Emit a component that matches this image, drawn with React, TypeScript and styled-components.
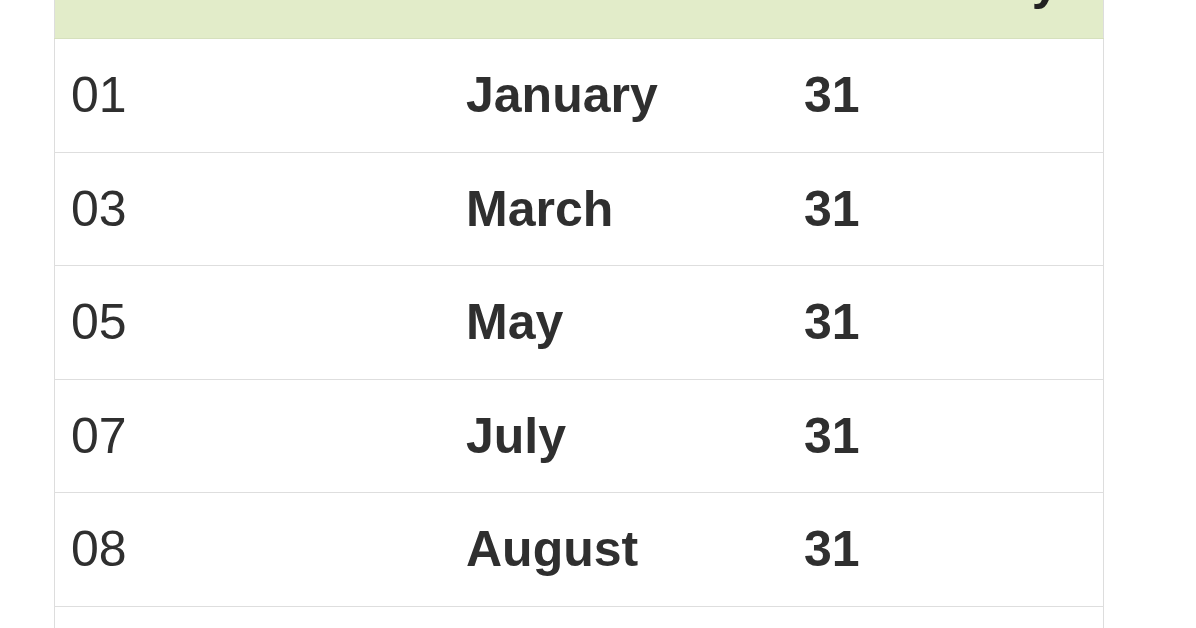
import React, { FC } from 'react';
import styled, { createGlobalStyle } from 'styled-components';

interface MonthRow {
  number: string;
  name: string;
  days: number;
}

const MONTHS: MonthRow[] = [
  { number: '01', name: 'January', days: 31 },
  { number: '03', name: 'March', days: 31 },
  { number: '05', name: 'May', days: 31 },
  { number: '07', name: 'July', days: 31 },
  { number: '08', name: 'August', days: 31 },
  { number: '10', name: 'October', days: 31 },
];

const GlobalStyle = createGlobalStyle`
  html, body {
    margin: 0;
    padding: 0;
    background: #ffffff;
    overflow: hidden;
  }
  body {
    font-family: "Liberation Sans", Arial, Helvetica, sans-serif;
    color: #333333;
  }
`;

const Page = styled.div`
  width: 1196px;
  height: 628px;
  overflow: hidden;
  padding-left: 54px;
  box-sizing: border-box;
`;

const MonthTable = styled.table`
  width: 1050px;
  margin-top: -74.5px;
  border-collapse: collapse;
  border-left: 1px solid #dddddd;
  border-right: 1px solid #dddddd;
  table-layout: fixed;
  font-size: 50px;
  line-height: 71.5px;
`;

// widths are content widths; cell padding (32px) is added on top
const HeadCell = styled.th<{ $width?: number }>`
  width: ${(p) => (p.$width ? `${p.$width}px` : 'auto')};
  padding: 21px 16px 20px;
  background: #e2ecc9;
  border-bottom: 1px solid #d6e0bd;
  text-align: left;
  font-weight: bold;
  white-space: nowrap;
  color: #222222;
`;

const Row = styled.tr`
  border-top: 1px solid #dedede;
`;

const Cell = styled.td<{ $bold?: boolean }>`
  padding: 21px 16px 20px;
  text-align: left;
  font-weight: ${(p) => (p.$bold ? 'bold' : 'normal')};
  color: #2f2f2f;
  white-space: nowrap;
`;

const App: FC = () => {
  return (
    <Page>
      <GlobalStyle />
      <MonthTable>
        <thead>
          <tr>
            <HeadCell $width={363}>Month Number</HeadCell>
            <HeadCell $width={306}>Month Name</HeadCell>
            <HeadCell>Month Days</HeadCell>
          </tr>
        </thead>
        <tbody>
          {MONTHS.map((m) => (
            <Row key={m.number}>
              <Cell>{m.number}</Cell>
              <Cell $bold>{m.name}</Cell>
              <Cell $bold>{m.days}</Cell>
            </Row>
          ))}
        </tbody>
      </MonthTable>
    </Page>
  );
};

export default App;
